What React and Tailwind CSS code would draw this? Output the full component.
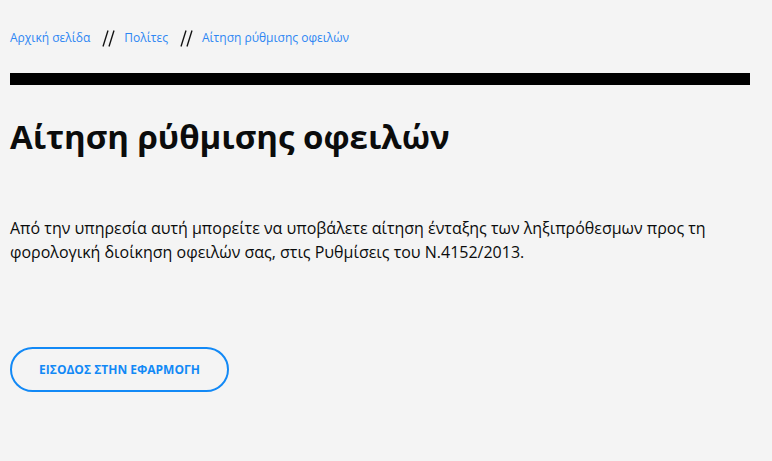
function Sep() {
  return (
    <svg className="ml-[12px] mr-[9px]" width="13" height="17" viewBox="0 0 13 17" fill="none" stroke="#111" strokeWidth="1.3">
      <line x1="6" y1="0.5" x2="1" y2="16.5" />
      <line x1="12" y1="0.5" x2="7" y2="16.5" />
    </svg>
  );
}

export default function App() {
  return (
    <div className="min-h-[461px] bg-[#f4f4f4] px-[10px] pt-[29px] font-['Open_Sans',sans-serif]">
      <div className="w-[740px]">
        {/* Breadcrumb */}
        <nav className="flex items-center text-[12px] leading-[18px] text-[#2d86f3]">
          <a href="#">Αρχική σελίδα</a>
          <Sep />
          <a href="#">Πολίτες</a>
          <Sep />
          <a href="#">Αίτηση ρύθμισης οφειλών</a>
        </nav>

        <div className="mt-[26px] h-[12px] bg-black" />

        <h1 className="mt-[30px] text-[33px] font-bold leading-[44px] text-[#0b0c0c]">
          Αίτηση ρύθμισης οφειλών
        </h1>

        <p className="mt-[57px] text-[16px] leading-[24px] text-[#0b0c0c]">
          Από την υπηρεσία αυτή μπορείτε να υποβάλετε αίτηση ένταξης των ληξιπρόθεσμων προς τη
          φορολογική διοίκηση οφειλών σας, στις Ρυθμίσεις του Ν.4152/2013.
        </p>

        <button className="mt-[83px] h-[45px] w-[219px] rounded-full border-2 border-[#1289f6] text-[12px] font-bold text-[#1289f6]">
          ΕΙΣΟΔΟΣ ΣΤΗΝ ΕΦΑΡΜΟΓΗ
        </button>
      </div>
    </div>
  );
}
